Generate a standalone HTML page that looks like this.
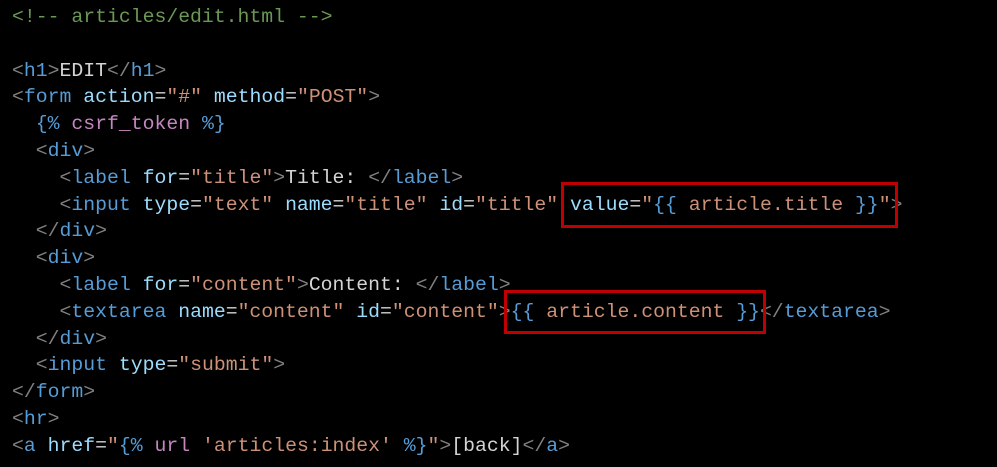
<!DOCTYPE html>
<html><head><meta charset="utf-8"><style>
html,body{margin:0;padding:0;background:#000;width:997px;height:467px;overflow:hidden}
pre{position:absolute;left:12px;top:4px;margin:0;font-family:"Liberation Mono",monospace;font-size:19.8px;line-height:26.8px;color:#d4d4d4}
.c{color:#6a9955}.b{color:#808080}.t{color:#569cd6}.a{color:#9cdcfe}.s{color:#ce9178}.p{color:#c586c0}.x{color:#d4d4d4}
.box{position:absolute;border:3px solid #c00000;box-sizing:border-box}
</style></head><body>
<pre><span class="c">&lt;!-- articles/edit.html --&gt;</span>

<span class="b">&lt;</span><span class="t">h1</span><span class="b">&gt;</span>EDIT<span class="b">&lt;/</span><span class="t">h1</span><span class="b">&gt;</span>
<span class="b">&lt;</span><span class="t">form</span> <span class="a">action</span>=<span class="s">"#"</span> <span class="a">method</span>=<span class="s">"POST"</span><span class="b">&gt;</span>
  <span class="t">{%</span> <span class="p">csrf_token</span> <span class="t">%}</span>
  <span class="b">&lt;</span><span class="t">div</span><span class="b">&gt;</span>
    <span class="b">&lt;</span><span class="t">label</span> <span class="a">for</span>=<span class="s">"title"</span><span class="b">&gt;</span>Title: <span class="b">&lt;/</span><span class="t">label</span><span class="b">&gt;</span>
    <span class="b">&lt;</span><span class="t">input</span> <span class="a">type</span>=<span class="s">"text"</span> <span class="a">name</span>=<span class="s">"title"</span> <span class="a">id</span>=<span class="s">"title"</span> <span class="a">value</span>=<span class="s">"</span><span class="t">{{</span><span class="s"> article.title </span><span class="t">}}</span><span class="s">"</span><span class="b">&gt;</span>
  <span class="b">&lt;/</span><span class="t">div</span><span class="b">&gt;</span>
  <span class="b">&lt;</span><span class="t">div</span><span class="b">&gt;</span>
    <span class="b">&lt;</span><span class="t">label</span> <span class="a">for</span>=<span class="s">"content"</span><span class="b">&gt;</span>Content: <span class="b">&lt;/</span><span class="t">label</span><span class="b">&gt;</span>
    <span class="b">&lt;</span><span class="t">textarea</span> <span class="a">name</span>=<span class="s">"content"</span> <span class="a">id</span>=<span class="s">"content"</span><span class="b">&gt;</span><span class="t">{{</span><span class="s"> article.content </span><span class="t">}}</span><span class="b">&lt;/</span><span class="t">textarea</span><span class="b">&gt;</span>
  <span class="b">&lt;/</span><span class="t">div</span><span class="b">&gt;</span>
  <span class="b">&lt;</span><span class="t">input</span> <span class="a">type</span>=<span class="s">"submit"</span><span class="b">&gt;</span>
<span class="b">&lt;/</span><span class="t">form</span><span class="b">&gt;</span>
<span class="b">&lt;</span><span class="t">hr</span><span class="b">&gt;</span>
<span class="b">&lt;</span><span class="t">a</span> <span class="a">href</span>=<span class="s">"</span><span class="t">{%</span> <span class="p">url</span> <span class="s">'articles:index'</span> <span class="t">%}</span><span class="s">"</span><span class="b">&gt;</span>[back]<span class="b">&lt;/</span><span class="t">a</span><span class="b">&gt;</span></pre>
<div class="box" style="left:561px;top:182px;width:337px;height:46px"></div>
<div class="box" style="left:504px;top:290px;width:262px;height:44px"></div>
</body></html>
